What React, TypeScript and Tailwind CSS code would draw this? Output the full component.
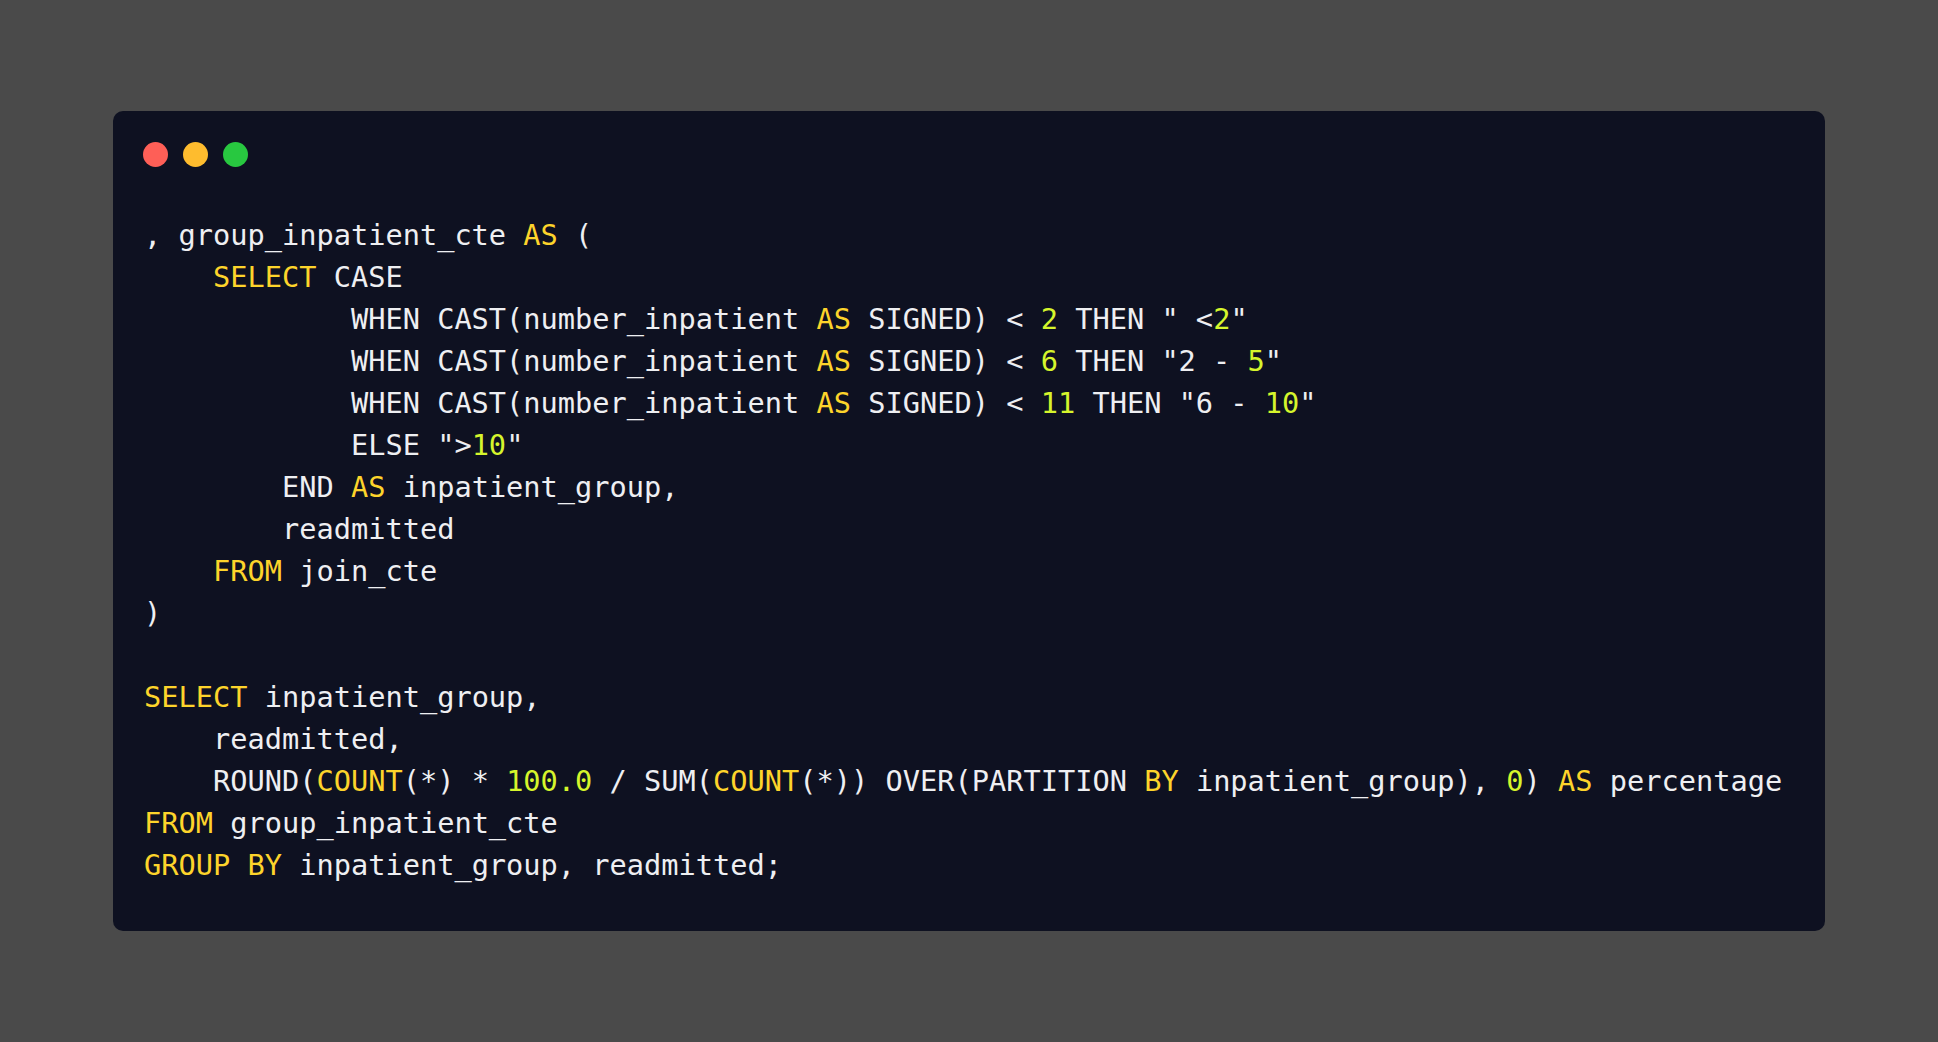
// Code snippet card: macOS-style window with SQL highlighted in yellow / lime.
import type { FC, ReactNode } from "react";

const Kw: FC<{ children: ReactNode }> = ({ children }) => (
  <span className="text-[#fdd42b]">{children}</span>
);

const Num: FC<{ children: ReactNode }> = ({ children }) => (
  <span className="text-[#d6f52c]">{children}</span>
);

const CodeBlock: FC = () => (
  <pre className="mt-[47px] pl-[1px] whitespace-pre font-['DejaVu_Sans_Mono',monospace] text-[28.65px] leading-[42px] text-[#eeeff2]">
    {", group_inpatient_cte "}<Kw>AS</Kw>{" ("}
    {"\n    "}<Kw>SELECT</Kw>{" CASE"}
    {"\n            WHEN CAST(number_inpatient "}<Kw>AS</Kw>{" SIGNED) < "}<Num>2</Num>{' THEN " <'}<Num>2</Num>{'"'}
    {"\n            WHEN CAST(number_inpatient "}<Kw>AS</Kw>{" SIGNED) < "}<Num>6</Num>{' THEN "2 - '}<Num>5</Num>{'"'}
    {"\n            WHEN CAST(number_inpatient "}<Kw>AS</Kw>{" SIGNED) < "}<Num>11</Num>{' THEN "6 - '}<Num>10</Num>{'"'}
    {'\n            ELSE ">'}<Num>10</Num>{'"'}
    {"\n        END "}<Kw>AS</Kw>{" inpatient_group,"}
    {"\n        readmitted"}
    {"\n    "}<Kw>FROM</Kw>{" join_cte"}
    {"\n)"}
    {"\n "}
    {"\n"}<Kw>SELECT</Kw>{" inpatient_group,"}
    {"\n    readmitted,"}
    {"\n    ROUND("}<Kw>COUNT</Kw>{"(*) * "}<Num>100.0</Num>{" / SUM("}<Kw>COUNT</Kw>{"(*)) OVER(PARTITION "}<Kw>BY</Kw>{" inpatient_group), "}<Num>0</Num>{") "}<Kw>AS</Kw>{" percentage"}
    {"\n"}<Kw>FROM</Kw>{" group_inpatient_cte"}
    {"\n"}<Kw>GROUP BY</Kw>{" inpatient_group, readmitted;"}
  </pre>
);

export default function App() {
  return (
    <div className="flex h-[1042px] w-full items-center justify-center bg-[#4a4a4a]">
      <div className="w-[1712px] rounded-[10px] bg-[#0e1121] pb-[45px] pl-[30px] pr-[30px] pt-[31px]">
        <div className="flex gap-[15px]">
          <span className="h-[25px] w-[25px] rounded-full bg-[#fe5f57]" />
          <span className="h-[25px] w-[25px] rounded-full bg-[#febc2e]" />
          <span className="h-[25px] w-[25px] rounded-full bg-[#28c840]" />
        </div>
        <CodeBlock />
      </div>
    </div>
  );
}
